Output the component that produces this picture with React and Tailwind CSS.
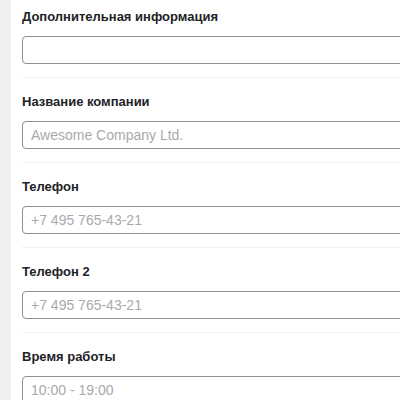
export default function App() {
  const fields = [
    { label: "Дополнительная информация", placeholder: "" },
    { label: "Название компании", placeholder: "Awesome Company Ltd." },
    { label: "Телефон", placeholder: "+7 495 765-43-21" },
    { label: "Телефон 2", placeholder: "+7 495 765-43-21" },
    { label: "Время работы", placeholder: "10:00 - 19:00" },
  ];
  return (
    <div
      className="flex h-[400px] w-[400px] overflow-hidden bg-[#f0f0f1]"
      style={{ fontFamily: '"Liberation Sans", Arial, sans-serif' }}
    >
      <div className="w-[11px] shrink-0 bg-[#f0f0f1]" />
      <div className="flex-1 overflow-hidden bg-white">
        <div className="mt-[-7px] pl-[11px]">
          {fields.map((f, i) => (
            <div key={i} className="border-b border-[#f0f0f1] pt-[14px] pb-[13px]">
              <div className="mb-[9px] text-[13px] font-bold leading-[20px] text-[#1d2327]">
                {f.label}
              </div>
              <input
                readOnly
                placeholder={f.placeholder}
                className="block h-[28px] w-[420px] rounded-[4px] border border-[#8c8f94] bg-white px-[8px] text-[14px] text-[#2c3338] placeholder:text-[#a7aaad] outline-none"
              />
            </div>
          ))}
        </div>
      </div>
    </div>
  );
}
